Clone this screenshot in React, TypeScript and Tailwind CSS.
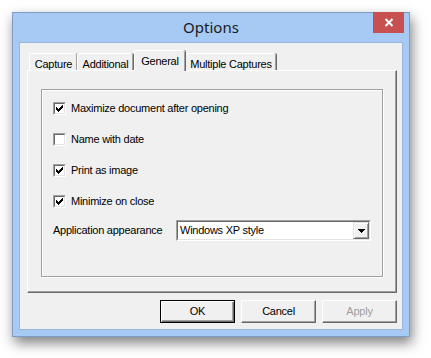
import React from "react";

const font = { fontFamily: '"Liberation Sans", Arial, sans-serif' };

function Check() {
  const cols = [2, 3, 4, 3, 2, 1, 0];
  return (
    <svg width="9" height="9" viewBox="0 0 9 9" shapeRendering="crispEdges">
      {cols.map((y, i) => (
        <rect key={i} x={i + 1} y={y + 1} width="1" height="3" fill="#000" />
      ))}
    </svg>
  );
}

function Checkbox({ checked, label }: { checked: boolean; label: string }) {
  return (
    <div className="flex items-center h-[13px] gap-[5px]">
      <div className="w-[13px] h-[13px] border border-t-[#a0a0a0] border-l-[#a0a0a0] border-r-white border-b-white">
        <div className="w-[11px] h-[11px] bg-white border border-t-[#696969] border-l-[#696969] border-r-[#e3e3e3] border-b-[#e3e3e3]">
          {checked && <Check />}
        </div>
      </div>
      <span className="text-[11px] leading-[13px] tracking-[-0.25px] text-black">{label}</span>
    </div>
  );
}

function Tab({ label, width, selected }: { label: string; width: number; selected?: boolean }) {
  if (selected) {
    return (
      <div
        className="relative z-10 h-[21px] mb-[-1px] ml-[1px] bg-[#f0f0f0] border-t border-l border-white rounded-tl-[2px] rounded-tr-[2px] shadow-[inset_-1px_0_0_#a0a0a0,1px_0_0_#696969] flex justify-center pt-[2px] text-[11px] tracking-[-0.25px] text-black"
        style={{ width }}
      >
        {label}
      </div>
    );
  }
  return (
    <div
      className="h-[17px] bg-[#f0f0f0] border-t border-l border-white rounded-tl-[2px] rounded-tr-[2px] shadow-[inset_-1px_0_0_#a0a0a0,1px_0_0_#696969] flex justify-center pt-[2px] text-[11px] tracking-[-0.25px] text-black"
      style={{ width }}
    >
      {label}
    </div>
  );
}

function Button({ label, def, disabled }: { label: string; def?: boolean; disabled?: boolean }) {
  return (
    <div
      className={
        "w-[75px] h-[23px] flex items-center justify-center text-[11px] tracking-[-0.25px] bg-[#f0f0f0] " +
        (def
          ? "border border-black shadow-[inset_1px_1px_0_#fff,inset_-1px_-1px_0_#696969,inset_-2px_-2px_0_#a0a0a0]"
          : "border border-t-white border-l-white border-r-[#696969] border-b-[#696969] shadow-[inset_-1px_-1px_0_#a0a0a0]") +
        (disabled ? " text-[#a0a0a0]" : " text-black")
      }
    >
      {label}
    </div>
  );
}

export default function App() {
  return (
    <div className="w-[431px] h-[358px] bg-white pt-[12px] pl-[12px]" style={font}>
      <div className="relative w-[398px] h-[325px] border border-[#7f9dc4] bg-[#a6caf4] flex flex-col shadow-[2px_6px_12px_rgba(0,0,0,0.5)]">
        <div className="h-[29px] flex items-center justify-center">
          <span className="text-[15px] text-[#1a1a1a]" style={{ fontFamily: '"Noto Sans", "Open Sans", sans-serif' }}>
            Options
          </span>
        </div>
        <div className="absolute top-[-1px] right-[5px] w-[31px] h-[21px] bg-[#c75050] flex items-center justify-center">
          <svg width="10" height="9" viewBox="0 0 10 9">
            <path d="M1.5 1 L8.5 8 M8.5 1 L1.5 8" stroke="#fff" strokeWidth="2" />
          </svg>
        </div>
        <div className="mx-[6px] w-[384px] h-[288px] bg-[#f0f0f0] border border-[#9ab6da] flex flex-col">
          <div className="mt-[7px] h-[20px] pl-[9px] flex items-end">
            <Tab label="Capture" width={48} />
            <Tab label="Additional" width={56} />
            <Tab label="General" width={51} selected />
            <Tab label="Multiple Captures" width={91} />
          </div>
          <div className="ml-[7px] w-[370px] h-[223px] border-t border-l border-white border-r border-b border-r-[#696969] border-b-[#696969] shadow-[inset_-1px_-1px_0_#a0a0a0]">
            <div className="ml-[13px] mt-[18px] w-[342px] h-[188px] border border-[#a0a0a0] shadow-[1px_1px_0_#fff,inset_1px_1px_0_#fff] pl-[11px] pt-[12px] flex flex-col">
              <div className="flex flex-col gap-[18px]">
                <Checkbox checked label="Maximize document after opening" />
                <Checkbox checked={false} label="Name with date" />
                <Checkbox checked label="Print as image" />
                <Checkbox checked label="Minimize on close" />
              </div>
              <div className="mt-[12px] flex items-center h-[21px]">
                <span className="w-[123px] text-[11px] tracking-[-0.25px] text-black">Application appearance</span>
                <div className="w-[195px] h-[21px] border border-t-[#a0a0a0] border-l-[#a0a0a0] border-r-white border-b-white">
                  <div className="w-full h-full bg-white border border-t-[#696969] border-l-[#696969] border-r-[#e3e3e3] border-b-[#e3e3e3] flex items-center">
                    <span className="flex-1 pl-[2px] text-[11px] tracking-[-0.25px] text-black">Windows XP style</span>
                    <div className="w-[16px] h-[17px] bg-[#f0f0f0] border border-t-[#e3e3e3] border-l-[#e3e3e3] border-r-[#696969] border-b-[#696969] shadow-[inset_1px_1px_0_#fff,inset_-1px_-1px_0_#a0a0a0] flex items-center justify-center">
                      <svg width="7" height="4" viewBox="0 0 7 4" shapeRendering="crispEdges">
                        <path d="M0 0 H7 L3.5 4 Z" fill="#000" />
                      </svg>
                    </div>
                  </div>
                </div>
              </div>
            </div>
          </div>
          <div className="mt-[7px] pr-[5px] flex justify-end gap-[6px]">
            <Button label="OK" def />
            <Button label="Cancel" />
            <Button label="Apply" disabled />
          </div>
        </div>
      </div>
    </div>
  );
}
